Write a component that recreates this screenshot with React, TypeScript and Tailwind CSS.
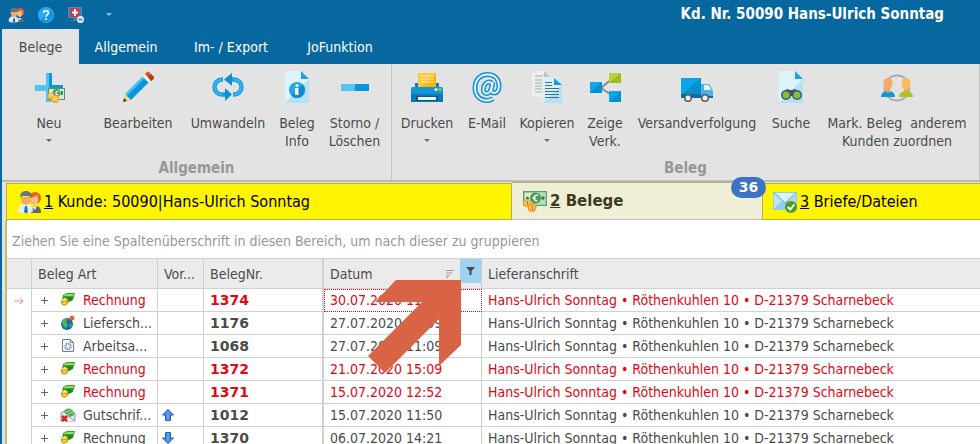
import type { ReactNode } from "react";

const PeopleIcon = ({ className }: { className: string }) => (
  <svg viewBox="0 0 24 24" className={className} aria-hidden="true">
    <path d="M14 23c-.5-4 1-7 5-7 3 0 5 2 5 7z" fill="#5d6a73" />
    <path d="M15 17l3 3 2-4z" fill="#f4f4f4" />
    <circle cx="18" cy="8" r="6" fill="#e8641b" />
    <path d="M13 8c2 0 5-1 7-3 2 5 2 8-2 10-3 0-5-3-5-7z" fill="#f7c08a" />
    <path d="M1 21c0-4 2-6 5-7h5c3 1 5 4 5 7-1 3-14 3-15 0z" fill="#e3edf6" />
    <path d="M6 14l3 3 3-3z" fill="#fff" />
    <path d="M8 16h2l1 6-2 1.500-2-1.500z" fill="#1878b8" />
    <path d="M4 7h10c0 5-2 8-5 8s-5-3-5-8z" fill="#f3a96b" />
    <path d="M3.500 8c-1-5 2-7 5.500-7s6.500 2 5.500 7l-2-2H5z" fill="#66757f" />
  </svg>
);

const HelpIcon = () => (
  <svg viewBox="0 0 16 16" className="size-4" aria-hidden="true">
    <circle cx="8" cy="8" r="8" fill="#27aaf0" />
    <path d="M13.600 2.400A8 8 0 0 1 2.400 13.600z" fill="#1593e0" />
    <path d="M5.500 6c0-3 5-3 5 0 0 1.800-2.400 1.700-2.400 3.700" fill="none" stroke="#fff" strokeWidth="1.700" />
    <circle cx="8.100" cy="12" r="1.100" fill="#fff" />
  </svg>
);

const SupportIcon = () => (
  <svg viewBox="0 0 16 16" className="size-4" aria-hidden="true">
    <path d="M0 0h14v11H0z" fill="#5f86b0" />
    <path d="M1 1h12v9H1z" fill="#3f78b5" />
    <path d="M5 11h4v2H5zM3 13h7v1H3z" fill="#4d7699" />
    <path d="M3 1h8v9H3z" fill="#e0303a" />
    <path d="M6 2h2v2.500h2v2H8V9H6V6.500H4v-2h2z" fill="#fff" />
    <circle cx="12.500" cy="12.500" r="3.500" fill="#e8f3fb" />
    <path d="M10.500 11.500h4v2h-4z" fill="#3b94d8" />
  </svg>
);

const MoneyIcon = ({ className }: { className: string }) => (
  <svg viewBox="0 0 24 22" className={className} aria-hidden="true">
    <path d="M0 1h24v15H0z" fill="#5aa368" />
    <path d="M1.500 2.500h21v12h-21z" fill="#d9efd9" />
    <path d="M13 2.500h9.500v12H8z" fill="#b5dcb9" />
    <circle cx="12.500" cy="8" r="5.500" fill="#4a9a59" />
    <path d="M15 5.500c-5-2-6 6-.500 5M9.500 8H13" fill="none" stroke="#e9f7e6" strokeWidth="1.500" />
    <circle cx="4.500" cy="8" r="1.500" fill="#2f7f45" />
    <circle cx="20" cy="8" r="1.700" fill="#2f7f45" />
    <circle cx="4" cy="13" r="4" fill="#f2a52c" />
    <circle cx="4" cy="13" r="2.700" fill="#ffca55" />
    <circle cx="9" cy="17.500" r="4.500" fill="#f0972a" />
    <circle cx="9" cy="17.500" r="3" fill="#ffc44b" />
    <path d="M3 11.500h1.500v3.500M8 16h1.500v4" fill="none" stroke="#d27a12" />
  </svg>
);

const MailIcon = () => (
  <svg viewBox="0 0 24 22" className="h-[22px] w-6 shrink-0" aria-hidden="true">
    <path d="M0 1h24v18H0z" fill="#8fcff0" />
    <path d="M1 2h22L12 12z" fill="#dff4fd" />
    <path d="M1 2.500v15L9 10z" fill="#bfe6f8" />
    <path d="M23 2.500v15L15 10z" fill="#a8dcf5" />
    <path d="M1 1.500L12 12 23 1.500" fill="none" stroke="#5bb3e0" />
    <circle cx="18" cy="16" r="6" fill="#4e9d1d" />
    <path d="M14.800 16l2.500 2.500 4-5" fill="none" stroke="#fff" strokeWidth="2" />
  </svg>
);

const NewIcon = () => (
  <>
    <path d="M13 2h6v29h-6zM2 14h28v6H2z" fill="#4fc1f2" />
    <path d="M16 2h3v12h11v6H16z" fill="#0d97dc" />
    <path d="M15 17h17v12H15z" fill="#4c9a5c" />
    <path d="M16 18h15v10H16z" fill="#d7eeda" />
    <circle cx="23.500" cy="22" r="4" fill="#4a9a59" />
    <path d="M25.500 20.500c-3.500-1-3.500 4 0 3" fill="none" stroke="#fff" strokeWidth="1.200" />
    <path d="M28 20h2v4h-2z" fill="#3b8b4d" />
    <circle cx="18" cy="25" r="3.500" fill="#f5b13a" />
    <circle cx="18" cy="24.500" r="2" fill="#ffd978" />
    <circle cx="22" cy="28" r="4" fill="#f2a52c" />
    <circle cx="22" cy="27.500" r="2.600" fill="#ffd063" />
  </>
);

const PencilIcon = () => (
  <>
    <path d="M1 31l2-8 6 6z" fill="#fbd57a" />
    <path d="M1 31l1-4 3 3z" fill="#3c3c3c" />
    <path d="M3 23L21 5l3 3L6 26z" fill="#46bdf2" />
    <path d="M5 25L23 7l4 4L9 29z" fill="#0b95da" />
    <path d="M20.500 5.500l2-2 6 6-2 2z" fill="#f2f2f2" />
    <path d="M23 3l2-2q1-1 2 0l5 5q.500 1-.500 2L29 10z" fill="#d95a1e" />
    <path d="M26 6l3-3 3 3q.500 1-.500 2L29 10z" fill="#b8400e" />
  </>
);

const ConvertIcon = () => (
  <>
    <path d="M17 8.500h5a7.500 7.500 0 0 1 0 15h-1M15 23.500h-5a7.500 7.500 0 0 1 0-15h1" fill="none" stroke="#1a9fe2" strokeWidth="4.500" />
    <path d="M22 8.500a7.500 7.500 0 0 1 0 15M10 23.500a7.500 7.500 0 0 1 0-15" fill="none" stroke="#3bb4ec" strokeWidth="2" />
    <path d="M12 8.500L20 2v13z" fill="#0d8fd4" />
    <path d="M20 23.500L13 17v13z" fill="#0d8fd4" />
  </>
);

const InfoIcon = () => (
  <>
    <path d="M4 0h16l8 8v24H4z" fill="#dff3fc" />
    <path d="M28 8v24H4z" fill="#b5e0f7" />
    <path d="M20 0l8 8h-8z" fill="#1ba3e4" />
    <circle cx="16" cy="19" r="8" fill="#22a7e8" />
    <path d="M21.700 13.300a8 8 0 0 1-11.400 11.400z" fill="#0b8dd2" />
    <path d="M14 17h3.500v7H14z" fill="#fff" />
    <circle cx="16" cy="14.500" r="1.500" fill="#fff" />
  </>
);

const MinusIcon = () => (
  <>
    <path d="M2 13h28v7H2z" fill="#56c3f3" />
    <path d="M16 13h14v7H16z" fill="#0b95dc" />
  </>
);

const PrinterIcon = () => (
  <>
    <path d="M4 12h24v6H4z" fill="#1b79b0" />
    <path d="M7 2h18v14H7z" fill="#f5b50e" />
    <path d="M7 2h18L10 16H7z" fill="#ffc93b" />
    <path d="M9 5h14M9 8h14M9 11h14" stroke="#fdeab5" />
    <path d="M2 16h28q2 0 2 2v13H0V18q0-2 2-2z" fill="#1295da" />
    <path d="M0 23h32v8H0z" fill="#0879bd" />
    <path d="M5 25h22v5H5z" fill="#155681" />
    <path d="M7 26h18v3H7z" fill="#f1f8fc" />
    <circle cx="25" cy="18.500" r="1.500" fill="#f5f7ef" />
    <circle cx="29" cy="18.500" r="1.500" fill="#9bd151" />
  </>
);

const AtIcon = () => {
  const ring = "M22 27.500C20 29 18 29.500 16 29.500 9 29.500 4 24.500 4 17 4 8.500 9.500 3.500 16.500 3.500S28 8 28 14.500c0 5-2 7.500-5 7.500-2 0-3-1.500-2.500-4L22 11";
  const bowl = "M20.500 16.500c-1 4-3 6-5 6-2.500 0-3.500-2-3-5 .500-4 3-6.500 5.500-6.500 2.500 0 3.500 2 2.500 5.500z";
  return (
    <g fill="none">
      <path d={ring} stroke="#1793d4" strokeWidth="5" />
      <path d={bowl} stroke="#1793d4" strokeWidth="5" />
      <path d={ring} stroke="#e8f6fd" strokeWidth="1.800" />
      <path d={bowl} stroke="#e8f6fd" strokeWidth="1.800" />
    </g>
  );
};

const CopyIcon = () => (
  <>
    <path d="M1 0h12l6 6v20H1z" fill="#eeeeee" />
    <path d="M13 0l6 6h-6z" fill="#bfc4c7" />
    <path d="M4 5h8M4 9h12M4 12h12M4 15h12M4 18h12M4 21h12" stroke="#a6abae" />
    <path d="M11 6h12l8 8v18H11z" fill="#d9f0fb" />
    <path d="M31 14v18H11z" fill="#b6e1f7" />
    <path d="M23 7l8 7h-8z" fill="#169fe2" />
    <path d="M14 11.500h7M14 14.500h7M14 17.500h14M14 20.500h14M14 23.500h14M14 26.500h14" stroke="#347092" />
  </>
);

const LinkedIcon = () => (
  <>
    <path d="M24 7L12 17l12 8" fill="none" stroke="#8b8b8b" strokeWidth="2" />
    <path d="M1 11h12v11H1z" fill="#09a7ed" />
    <path d="M13 11v11H1z" fill="#078ed4" />
    <path d="M20 2h12v10H20z" fill="#b8d13a" />
    <path d="M32 2v10H20z" fill="#a0ba1e" />
    <path d="M20 20h12v11H20z" fill="#09a7ed" />
    <path d="M32 20v11H20z" fill="#078ed4" />
  </>
);

const TruckIcon = () => (
  <>
    <path d="M0 7h20v16H0z" fill="#0aa5eb" />
    <path d="M20 7v16H1z" fill="#078dd0" />
    <path d="M0 23h32v4H0z" fill="#166a99" />
    <path d="M20 13h7q2 0 3 3l2 4v5H20z" fill="#43b6e8" />
    <path d="M23 14h4q2 1 3 5h-7z" fill="#e8f7fd" />
    <circle cx="7" cy="27" r="4" fill="#55585a" />
    <circle cx="7" cy="27" r="2.500" fill="#eeeeee" />
    <circle cx="24" cy="27" r="4" fill="#55585a" />
    <circle cx="24" cy="27" r="2.500" fill="#eeeeee" />
  </>
);

const SearchIcon = () => (
  <>
    <path d="M4 0h16l8 8v24H4z" fill="#dff3fc" />
    <path d="M28 8v24H4z" fill="#b5e0f7" />
    <path d="M20 0l8 8h-8z" fill="#1ba3e4" />
    <path d="M6 23l6-5 3 1h2l3-1 6 5-8 2h-4z" fill="#3b5261" />
    <circle cx="11" cy="24" r="5" fill="#455863" />
    <circle cx="22" cy="24" r="5" fill="#455863" />
    <circle cx="11" cy="24" r="3.500" fill="#83bd3c" />
    <circle cx="22" cy="24" r="3.500" fill="#83bd3c" />
  </>
);

const AssignIcon = () => (
  <>
    <circle cx="16" cy="17" r="12.500" fill="none" stroke="#ababab" strokeWidth="1.800" />
    <path d="M0 26c0-5 4-6 7-6s7 1 7 6z" fill="#0d98da" />
    <path d="M18 26c0-5 4-6 7-6s7 1 7 6z" fill="#a9c81f" />
    <path d="M5 17h4v4l-2 1-2-1zM23 17h4v4l-2 1-2-1z" fill="#f1a14e" />
    <path d="M2.500 11c0-5 9-5 9 0 0 5-2 8-4.500 8s-4.500-3-4.500-8z" fill="#f6a86c" />
    <path d="M20.500 11c0-5 9-5 9 0 0 5-2 8-4.500 8s-4.500-3-4.500-8z" fill="#f8bd5b" />
  </>
);

type Action = { label: string; width: string; icon: ReactNode; menu?: boolean };

const generalActions: Action[] = [
  { label: "Neu", width: "w-[94px]", icon: <NewIcon />, menu: true },
  { label: "Bearbeiten", width: "w-[84px]", icon: <PencilIcon /> },
  { label: "Umwandeln", width: "w-24", icon: <ConvertIcon /> },
  { label: "Beleg\nInfo", width: "w-[42px]", icon: <InfoIcon /> },
  { label: "Storno /\nLöschen", width: "w-[73px]", icon: <MinusIcon /> },
];

const documentActions: Action[] = [
  { label: "Drucken", width: "w-[70px]", icon: <PrinterIcon />, menu: true },
  { label: "E-Mail", width: "w-[50px]", icon: <AtIcon /> },
  { label: "Kopieren", width: "w-[70px]", icon: <CopyIcon />, menu: true },
  { label: "Zeige\nVerk.", width: "w-[46px]", icon: <LinkedIcon /> },
  { label: "Versandverfolgung", width: "w-[138px]", icon: <TruckIcon /> },
  { label: "Suche", width: "w-[50px]", icon: <SearchIcon /> },
  { label: "Mark. Beleg  anderem\nKunden zuordnen", width: "w-[162px]", icon: <AssignIcon /> },
];

const Caret = ({ className }: { className: string }) => (
  <svg viewBox="0 0 6 3" className={className} aria-hidden="true">
    <path d="M0 0h6L3 3z" fill="currentColor" />
  </svg>
);

const RibbonGroup = ({ title, actions, className }: { title: string; actions: Action[]; className: string }) => (
  <section className={`flex flex-col border-r border-[#c3c3c3] ${className}`}>
    <div className="flex h-24 pt-[7px]">
      {actions.map((action) => (
        <button key={action.label} type="button" className={`flex shrink-0 flex-col items-center ${action.width}`}>
          <svg viewBox="0 0 32 32" className="mb-[11px] size-8" aria-hidden="true">
            {action.icon}
          </svg>
          <span className="text-center leading-[18px] whitespace-pre">{action.label}</span>
          {action.menu && <Caret className="mt-[7px] h-[3px] w-1.5 text-[#6a6a6a]" />}
        </button>
      ))}
    </div>
    <h2 className="text-center text-[15px] leading-4 font-bold text-[#979797]">{title}</h2>
  </section>
);

const InvoiceIcon = () => (
  <>
    <path d="M3 3l4-2h8l-2 7-6 3-5-3z" fill="#35a329" />
    <path d="M4 3l4-1h6l-1 2H4z" fill="#8dde68" />
    <path d="M7 5h6l-1 3-5 2z" fill="#1f8a20" />
    <path d="M1 8l4-2 3 2v4l-4 2-3-2z" fill="#d8a81b" />
    <path d="M1 8l4-2 3 2-4 1zM2 11l3-1 2 1-3 1z" fill="#ffe36a" />
  </>
);

const DeliveryIcon = () => (
  <>
    <circle cx="7" cy="9" r="6" fill="#1766bd" />
    <path d="M2 6c2-3 5-3 6-2l-2 3 2 3-2 3C3 12 2 9 2 6z" fill="#4fb551" />
    <path d="M9 8l4 1-2 4-2-1z" fill="#2e9f52" />
    <circle cx="12" cy="3" r="2.500" fill="#e0643f" />
    <path d="M12 5L9 8" stroke="#8d4c3a" />
  </>
);

const WorkOrderIcon = () => (
  <>
    <path d="M2.500 1.500h8l3 3v9h-11z" fill="#f5f8fd" stroke="#6a7fa8" />
    <path d="M10.500 1.500v3h3" fill="none" stroke="#6a7fa8" />
    <circle cx="8" cy="8.500" r="3" fill="#c5d0e8" stroke="#8794bb" strokeWidth="1.500" strokeDasharray="1.500 .8" />
    <circle cx="8" cy="8.500" r="1.200" fill="#fff" />
  </>
);

const CreditIcon = () => (
  <>
    <path d="M1 6l7-4 7 4v8H1z" fill="#dce3ee" stroke="#8c98ad" />
    <path d="M4 5c2-4 6-5 9-1l1 4-4 2z" fill="#42ae46" />
    <path d="M6 5l5-2M8 7l5-2" stroke="#b8e7a7" />
    <path d="M1 14l6-5 8 5" fill="#f7f8fc" stroke="#9aa4b8" />
    <path d="M2 9l5 5M7 9l-5 5" stroke="#d52618" strokeWidth="2.500" />
  </>
);

const kindIcons = {
  invoice: <InvoiceIcon />,
  delivery: <DeliveryIcon />,
  work: <WorkOrderIcon />,
  credit: <CreditIcon />,
};

type Row = {
  kind: keyof typeof kindIcons;
  label: string;
  number: string;
  date: string;
  red?: boolean;
  trend?: "up" | "down";
};

const rows: Row[] = [
  { kind: "invoice", label: "Rechnung", number: "1374", date: "30.07.2020 11:07", red: true },
  { kind: "delivery", label: "Liefersch...", number: "1176", date: "27.07.2020 11:09" },
  { kind: "work", label: "Arbeitsa...", number: "1068", date: "27.07.2020 11:09" },
  { kind: "invoice", label: "Rechnung", number: "1372", date: "21.07.2020 15:09", red: true },
  { kind: "invoice", label: "Rechnung", number: "1371", date: "15.07.2020 12:52", red: true },
  { kind: "credit", label: "Gutschrif...", number: "1012", date: "15.07.2020 11:50", trend: "up" },
  { kind: "invoice", label: "Rechnung", number: "1370", date: "06.07.2020 14:21", trend: "down" },
];

const address = "Hans-Ulrich Sonntag • Röthenkuhlen 10 • D-21379 Scharnebeck";

const TrendArrow = ({ trend }: { trend: "up" | "down" }) => (
  <svg viewBox="0 0 12 12" className={`size-3 ${trend === "down" ? "rotate-180" : ""}`} aria-hidden="true">
    <path d="M6 .500L11.500 6H8.500v5.500h-5V6H.500z" fill="#3f8de0" stroke="#2461ac" />
    <path d="M6 3v8" stroke="#63aaf0" strokeWidth="1.500" />
  </svg>
);

const DocumentTable = () => (
  <div className="relative">
    <table className="w-full table-fixed border-separate border-spacing-0 text-left">
      <colgroup>
        <col className="w-[25px]" />
        <col className="w-[126px]" />
        <col className="w-[46px]" />
        <col className="w-[120px]" />
        <col className="w-[158px]" />
        <col />
      </colgroup>
      <thead className="bg-[#ebebeb]">
        <tr className="h-[31px] *:border-y *:border-[#d0d0d0] *:font-normal">
          <th className="border-r" aria-label="Zeiger" />
          <th className="border-r px-1.5">Beleg Art</th>
          <th className="border-r pl-1.5 whitespace-nowrap">Vor...</th>
          <th className="border-r-2 px-1.5">BelegNr.</th>
          <th className="border-r p-0">
            <div className="flex h-[29px] items-center pl-1.5">
              <span className="grow">Datum</span>
              <svg viewBox="0 0 8 8" className="mr-1.5 size-2" aria-hidden="true">
                <path d="M0 .500h8M0 3h6M0 5.500h4M0 7.500h2" stroke="#9b9b9b" />
              </svg>
              <button type="button" aria-label="Filter" className="flex h-6 w-[21px] justify-center self-start bg-[#9fd3f1] pt-2">
                <svg viewBox="0 0 9 8" className="h-2 w-[9px]" aria-hidden="true">
                  <path d="M0 0h9L5.500 4v4h-2V4z" fill="#434a50" />
                </svg>
              </button>
            </div>
          </th>
          <th className="px-1.5">Lieferanschrift</th>
        </tr>
      </thead>
      <tbody>
        {rows.map((row, index) => (
          <tr key={row.number} className={`h-[23px] leading-[22px] *:border-[#d0d0d0] ${row.red ? "text-[#e30613]" : ""}`}>
            <td className="border-r p-0">
              {index === 0 && (
                <svg viewBox="0 0 10 8" className="ml-[7px] h-2 w-2.5" aria-hidden="true">
                  <path d="M0 4h9M6 1l3 3-3 3" fill="none" stroke="#ef8f7c" />
                </svg>
              )}
            </td>
            <td className="border-r border-b p-0">
              <div className="flex items-center pl-[9px]">
                <button type="button" aria-label="Aufklappen" className="mr-3">
                  <svg viewBox="0 0 7 7" className="size-[7px]">
                    <path d="M0 3.500h7M3.500 0v7" stroke="#666" />
                  </svg>
                </button>
                <svg viewBox="0 0 16 16" className="mr-[7px] size-4 shrink-0" aria-hidden="true">
                  {kindIcons[row.kind]}
                </svg>
                <span className="whitespace-nowrap">{row.label}</span>
              </div>
            </td>
            <td className="border-r border-b p-0">
              <div className="pl-1">{row.trend && <TrendArrow trend={row.trend} />}</div>
            </td>
            <td className="border-r-2 border-b px-1.5 py-0 font-['DejaVu_Sans',sans-serif] font-bold">{row.number}</td>
            {index === 0 ? (
              <td className="p-0">
                <div className="h-[23px] border border-dotted border-[#c8141c] pl-[5px] leading-[21px]">{row.date}</div>
              </td>
            ) : (
              <td className="border-r border-b p-0 pl-1.5">{row.date}</td>
            )}
            <td className="border-b px-1.5 py-0 whitespace-nowrap">{address}</td>
          </tr>
        ))}
      </tbody>
    </table>
    {/* Callout arrow pointing at the date filter */}
    <svg viewBox="0 0 93 94" className="pointer-events-none absolute top-[22px] left-[361px] h-[94px] w-[93px]" aria-hidden="true">
      <path d="M28 0h65v65L71 86V39L17 93 0 76 54 22H7z" fill="#d86345" />
    </svg>
  </div>
);

const App = () => {
  return (
    <main className="flex h-screen flex-col overflow-hidden border-l-2 border-[#07689f] bg-[#e3e3e3] font-['DejaVu_Sans_Condensed','DejaVu_Sans',sans-serif] text-sm text-[#4b4b4b]">
      <header className="shrink-0 bg-[#07689f] text-white">
        <div className="flex h-[29px] items-center pr-9 pl-1.5">
          <button type="button" aria-label="Kunden" className="mr-3.5">
            <PeopleIcon className="size-4" />
          </button>
          <button type="button" aria-label="Hilfe" className="mr-3.5">
            <HelpIcon />
          </button>
          <button type="button" aria-label="Fernwartung" className="mr-[22px]">
            <SupportIcon />
          </button>
          <button type="button" aria-label="Weitere">
            <Caret className="h-[3px] w-1.5 text-[#8fbbd5]" />
          </button>
          <h1 className="ml-auto text-[15px] font-bold">Kd. Nr. 50090 Hans-Ulrich Sonntag</h1>
        </div>
        <nav className="flex h-[35px]">
          <button type="button" className="w-[77px] bg-[#e3e3e3] text-[#4b4b4b]">Belege</button>
          <button type="button" className="w-[94px]">Allgemein</button>
          <button type="button" className="w-[116px]">Im- / Export</button>
          <button type="button" className="w-[102px]">JoFunktion</button>
        </nav>
      </header>

      <div className="flex h-[118px] shrink-0 border-b-2 border-[#b9b9b9]">
        <RibbonGroup title="Allgemein" actions={generalActions} className="shrink-0" />
        <RibbonGroup title="Beleg" actions={documentActions} className="grow" />
      </div>

      <div className="ml-1 grid h-[38px] shrink-0 grid-cols-[506fr_250fr_218fr] text-base text-black">
        <button type="button" className="mt-px flex items-center border border-[#b9b239] bg-[#fff500] pl-2.5">
          <PeopleIcon className="mr-[3px] size-6 shrink-0" />
          <span><u>1</u> Kunde: 50090|Hans-Ulrich Sonntag</span>
        </button>
        <button type="button" className="relative flex items-center border-t border-b border-t-[#b9b239] border-b-[#c0c0c0] bg-[#efeed6] pl-[11px] font-['DejaVu_Sans',sans-serif] text-[15px] font-bold text-[#3c3c1c]">
          <MoneyIcon className="mr-[3px] h-[22px] w-6 shrink-0" />
          <span><u>2</u> Belege</span>
          <span className="absolute -top-1.5 -right-1 h-[21px] w-[35px] rounded-full bg-[#3d73c2] text-center text-sm leading-[21px] text-white">
            36
          </span>
        </button>
        <button type="button" className="mt-px flex items-center border border-r-0 border-[#b9b239] bg-[#fff500] pl-2.5">
          <MailIcon />
          <span className="ml-[3px]"><u>3</u> Briefe/Dateien</span>
        </button>
      </div>

      <section className="ml-[3px] grow border-l-2 border-[#c1bd79] bg-white">
        <p className="h-[38px] pl-[5px] leading-[42px] whitespace-nowrap text-[#979797]">
          Ziehen Sie eine Spaltenüberschrift in diesen Bereich, um nach dieser zu gruppieren
        </p>
        <DocumentTable />
      </section>
    </main>
  );
};

export default App;
